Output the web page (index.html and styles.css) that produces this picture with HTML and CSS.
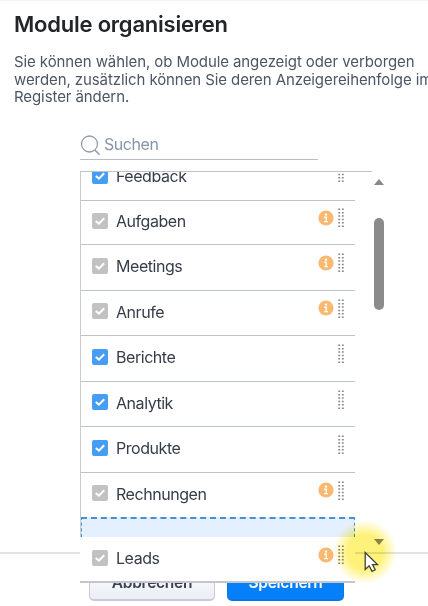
FILE: index.html
```html
<!DOCTYPE html>
<html lang="de">
<head>
<meta charset="utf-8">
<title>Module organisieren</title>
<link rel="stylesheet" href="styles.css">
</head>
<body>
<svg class="defs" width="0" height="0">
  <symbol id="check" viewBox="0 0 16 16"><path d="M3.8 8 6.9 10.6 12.2 5.2" fill="none" stroke="#fff" stroke-width="2"/></symbol>
  <symbol id="info" viewBox="0 0 16 16"><circle cx="8" cy="8" r="7.6" fill="#fbb871"/><circle cx="8" cy="4.6" r="1.2" fill="#fff"/><path d="M6.2 7.2h2v4.2M6.2 11.6h3.8" fill="none" stroke="#fff" stroke-width="1.4"/></symbol>
  <symbol id="grip" viewBox="0 0 6 19"><path d="M1.2 .5v19M4.8 .5v19" stroke="#838588" stroke-width="1.8" stroke-dasharray="1.5 1.9"/></symbol>
</svg>
<main class="dialog">
  <h1 class="title">Module organisieren</h1>
  <p class="intro"><span class="line">Sie können wählen, ob Module angezeigt oder verborgen</span><span class="line">werden, zusätzlich können Sie deren Anzeigereihenfolge im</span><span class="line">Register ändern.</span></p>
  <div class="search">
    <svg width="20" height="21" viewBox="0 0 20 21"><circle cx="9.5" cy="9" r="8" fill="none" stroke="#919dab" stroke-width="1.3"/><path d="m14.8 15 4.8 4.7" stroke="#919dab" stroke-width="1.6"/></svg>
    <span class="hint">Suchen</span>
  </div>
  <div class="viewport">
    <div class="list">
      <ul class="rows">
        <li class="row tall"><i class="box on"><svg><use href="#check"/></svg></i><span class="name">Feedback</span><svg class="grip"><use href="#grip"/></svg></li>
        <li class="row short"><i class="box"><svg><use href="#check"/></svg></i><span class="name">Aufgaben</span><svg class="info"><use href="#info"/></svg><svg class="grip"><use href="#grip"/></svg></li>
        <li class="row tall"><i class="box"><svg><use href="#check"/></svg></i><span class="name">Meetings</span><svg class="info"><use href="#info"/></svg><svg class="grip"><use href="#grip"/></svg></li>
        <li class="row"><i class="box"><svg><use href="#check"/></svg></i><span class="name">Anrufe</span><svg class="info"><use href="#info"/></svg><svg class="grip"><use href="#grip"/></svg></li>
        <li class="row tall"><i class="box on"><svg><use href="#check"/></svg></i><span class="name">Berichte</span><svg class="grip"><use href="#grip"/></svg></li>
        <li class="row"><i class="box on"><svg><use href="#check"/></svg></i><span class="name">Analytik</span><svg class="grip"><use href="#grip"/></svg></li>
        <li class="row tall"><i class="box on"><svg><use href="#check"/></svg></i><span class="name">Produkte</span><svg class="grip"><use href="#grip"/></svg></li>
        <li class="row short last"><i class="box"><svg><use href="#check"/></svg></i><span class="name">Rechnungen</span><svg class="info"><use href="#info"/></svg><svg class="grip"><use href="#grip"/></svg></li>
        <li class="drop"></li>
      </ul>
    </div>
    <div class="scrollbar"><span class="up"></span><span class="thumb"></span><span class="down"></span></div>
  </div>
  <footer class="footer">
    <button class="btn cancel">Abbrechen</button>
    <button class="btn save">Speichern</button>
  </footer>
  <div class="row dragged"><i class="box"><svg><use href="#check"/></svg></i><span class="name">Leads</span><svg class="info"><use href="#info"/></svg><svg class="grip"><use href="#grip"/></svg></div>
  <div class="glow"></div>
  <svg class="cursor" width="16" height="22" viewBox="0 0 16 22"><path d="M1.2 1.5v17l4-3.7 2.8 5.5 3.2-1.5-2.7-5.2h5z" fill="#fff" stroke="#414032" stroke-width="1.3"/></svg>
</main>
</body>
</html>
```

FILE: styles.css
```css
* { box-sizing: border-box; }
body { margin: 0; background: #fff; font-family: Inter, "Liberation Sans", sans-serif; color: #353d49; }
.defs { position: absolute; }
.dialog { position: relative; width: 428px; height: 606px; overflow: hidden; display: flex; flex-direction: column; border-top: 1px solid #fbf1f1; }
.title { margin: 8px 0 0 14px; font-size: 22px; line-height: 30px; font-weight: 600; letter-spacing: -.22px; color: #222628; white-space: nowrap; }
.intro { margin: 14px 0 0 14px; font-size: 15px; line-height: 17.5px; letter-spacing: -.09px; color: #4c5665; white-space: nowrap; }
.line { display: block; }
.search { display: flex; gap: 4px; width: 238px; height: 27px; margin: 27px 0 0 80px; padding-top: 2px; border-bottom: 1px solid #b7bdc3; }
.hint { font-size: 16px; line-height: 19px; letter-spacing: -.45px; color: #8794a7; }
.viewport { display: flex; flex: none; height: 381px; margin: 11px 0 0 80px; }
.list { width: 292px; height: 381px; overflow: hidden; border-top: 1px solid #bfc2c5; border-left: 1px solid #c9cccf; }
.rows { width: 274px; margin: -17px 0 0; padding: 0; list-style: none; }
.row { display: flex; align-items: center; height: 45px; padding: 0 11px 4px 11px; border-bottom: 1px solid #bdc3c9; }
.tall { height: 46px; }
.short { height: 44px; }
.last { border-bottom: 0; }
.box { flex: none; width: 16px; height: 16px; margin-top: 1px; background: #c2c2c2; border-radius: 2px; }
.box.on { background: #469ef4; }
.box svg { display: block; width: 16px; height: 16px; }
.name { margin: 2px auto 0 8px; font-size: 16px; line-height: 22px; letter-spacing: -.45px; }
.info { width: 16px; height: 16px; margin: -5px 4px 0 0; }
.grip { width: 6px; height: 19px; margin-top: -5px; }
.drop { height: 20px; background: #e4efff; border: 2px dashed #4590d2; border-width: 2px 1px 0; }
.scrollbar { display: flex; flex-direction: column; align-items: center; width: 14px; padding-top: 8px; }
.up, .down { border: 5px solid transparent; border-top: 0; border-bottom: 6px solid #898989; }
.thumb { width: 10px; height: 92px; margin: 33px 0 229px; border-radius: 5px; background: #8b8b8b; }
.down { border-top: 6px solid #898989; border-bottom: 0; }
.footer { display: flex; flex: none; gap: 12px; height: 54px; padding: 13px 0 0 89px; border-top: 2px solid #e3e4e6; }
.btn { width: 126px; height: 34px; padding: 0; border: 1px solid #c8cbd3; border-bottom-width: 2px; border-radius: 5px; background: linear-gradient(#fff, #eaedf6); color: #3b4250; font: 600 15.5px/30px Inter, sans-serif; letter-spacing: -.25px; }
.save { width: 117px; border-color: #0878e8; background: #067ffa; color: #fff; }
.dragged { position: absolute; left: 80px; top: 536px; width: 275px; height: 46px; padding-left: 12px; background: #fff; border-bottom: 2px solid #c5c6ca; }
.glow { position: absolute; left: 333px; top: 519px; width: 64px; height: 64px; border-radius: 50%; background: radial-gradient(circle closest-side, #fff27b 0 55%, #fff27b00 100%); mix-blend-mode: multiply; }
.cursor { position: absolute; left: 364px; top: 550px; }
```
